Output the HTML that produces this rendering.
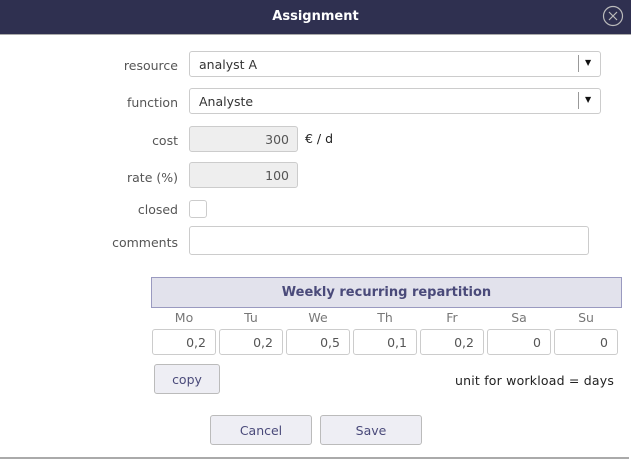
<html><head><style>
body{margin:0;width:631px;height:459px;background:#fff;font-family:"DejaVu Sans","Liberation Sans",sans-serif;font-size:12.5px;color:#333;position:relative;overflow:hidden}
.a{position:absolute}
.hdr{left:0;top:0;width:631px;height:34px;background:#2f3050;color:#fff;font-weight:bold;font-size:13px;text-align:center;line-height:34px;border-bottom:1px solid #aaa}
.lbl{width:178px;left:0;text-align:right;color:#555}
.in{border:1px solid #ccc;border-radius:3px;background:#fff;box-sizing:border-box}
.g{background:#eee;text-align:right;padding-right:8px;color:#555}
.btn{border:1px solid #bbb;border-radius:3px;background:#eeeef4;color:#4a4a7a;text-align:center;box-sizing:border-box}
.day{width:64px;text-align:center;color:#777;top:310px}
.dv{width:64px;height:26px;top:329px;text-align:right;padding-right:9px;line-height:25px;color:#555}
</style></head><body>
<div class="a hdr">Assignment</div>
<svg class="a" style="left:602px;top:5px" width="22" height="22"><circle cx="11" cy="11" r="9.5" fill="none" stroke="#bbb" stroke-width="1.2"/><path d="M7 7L15 15M15 7L7 15" stroke="#bbb" stroke-width="1.2"/></svg>
<div class="a lbl" style="top:58px">resource</div>
<div class="a in" style="left:189px;top:51px;width:412px;height:26px;line-height:25px;padding-left:9px">analyst A</div>
<div class="a" style="left:578px;top:55px;width:1px;height:17px;background:#999"></div>
<div class="a" style="left:585px;top:58px;font-size:8px;color:#111">▼</div>
<div class="a lbl" style="top:95px">function</div>
<div class="a in" style="left:189px;top:88px;width:412px;height:26px;line-height:25px;padding-left:9px">Analyste</div>
<div class="a" style="left:578px;top:92px;width:1px;height:17px;background:#999"></div>
<div class="a" style="left:585px;top:95px;font-size:8px;color:#111">▼</div>
<div class="a lbl" style="top:133px">cost</div>
<div class="a in g" style="left:189px;top:126px;width:109px;height:26px;line-height:25px">300</div>
<div class="a" style="left:305px;top:131px;color:#222">€ / d</div>
<div class="a lbl" style="top:170px">rate (%)</div>
<div class="a in g" style="left:189px;top:162px;width:109px;height:26px;line-height:25px">100</div>
<div class="a lbl" style="top:202px">closed</div>
<div class="a in" style="left:189px;top:200px;width:18px;height:18px"></div>
<div class="a lbl" style="top:235px">comments</div>
<div class="a in" style="left:189px;top:226px;width:400px;height:29px"></div>
<div class="a" style="left:151px;top:277px;width:469px;height:29px;background:#e2e2ec;border:1px solid #9a9ac0;color:#4a4a7a;font-weight:bold;font-size:13px;text-align:center;line-height:30px">Weekly recurring repartition</div>
<div class="a day" style="left:152px">Mo</div><div class="a day" style="left:219px">Tu</div><div class="a day" style="left:286px">We</div><div class="a day" style="left:353px">Th</div><div class="a day" style="left:420px">Fr</div><div class="a day" style="left:487px">Sa</div><div class="a day" style="left:554px">Su</div>
<div class="a in dv" style="left:152px">0,2</div><div class="a in dv" style="left:219px">0,2</div><div class="a in dv" style="left:286px">0,5</div><div class="a in dv" style="left:353px">0,1</div><div class="a in dv" style="left:420px">0,2</div><div class="a in dv" style="left:487px">0</div><div class="a in dv" style="left:554px">0</div>
<div class="a btn" style="left:154px;top:364px;width:66px;height:30px;line-height:29px">copy</div>
<div class="a" style="left:455px;top:373px;color:#222;letter-spacing:0.2px">unit for workload = days</div>
<div class="a btn" style="left:210px;top:415px;width:102px;height:30px;line-height:29px">Cancel</div>
<div class="a btn" style="left:320px;top:415px;width:102px;height:30px;line-height:29px">Save</div>
<div class="a" style="left:0;top:457px;width:629px;height:2px;background:#aaa"></div>
</body></html>
